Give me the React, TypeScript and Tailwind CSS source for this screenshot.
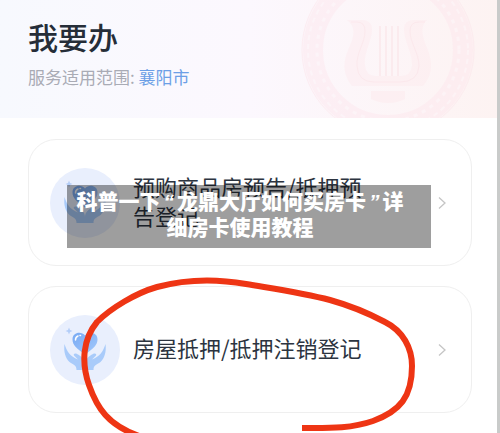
import type { ReactNode } from 'react'

function Emblem() {
  return (
    <svg viewBox="0 0 180 118" className="absolute top-0 right-5 h-[118px] w-[180px] opacity-60" fill="none" aria-hidden="true">
      <circle cx="91" cy="50" r="75" stroke="#fde6ec" strokeWidth="20" opacity="0.7" />
      <circle cx="91" cy="50" r="86" stroke="#fce6ec" strokeWidth="1" />
      <circle cx="91" cy="50" r="80" stroke="#fdf3f7" strokeWidth="2" strokeDasharray="5 4" />
      <circle cx="91" cy="50" r="71" stroke="#fdf3f7" strokeWidth="3" strokeDasharray="4 5" />
      <path
        d="M50 20h14q11 0 11 9c0 12-9 24-7 37q1 10 11 10h25q10 0 11-10c1-13-8-25-8-37q0-9 11-9h12c-8 7-4 18 0 28 5 13 7 25-4 38H55c-10-13-9-24-3-38 5-11 8-20-2-28z"
        fill="#fdeaee"
        opacity="0.75"
      />
      <path
        d="M54 22h6q8 0 8 9c0 12-9 22-8 35q1 16 17 16h26q18 0 19-16c0-13-9-23-9-35q0-9 9-9h6"
        stroke="#fbe1e6"
        strokeWidth="1"
      />
      <path d="M83 26v50M89 26v50M95 26v50M101 26v50" stroke="#fbe5e9" strokeWidth="2" />
      <path d="M74 91h34v8q-17 8-34 0z" fill="#fdecef" />
    </svg>
  )
}

function HeartHands() {
  return (
    <span className="h-[70px] w-[70px] shrink-0 rounded-full bg-[#e9effd]">
      <svg viewBox="0 0 70 70" className="h-full w-full" fill="none" aria-hidden="true">
        <defs>
          <linearGradient id="heart" x1="0" y1="0" x2="1" y2="1">
            <stop offset="0" stopColor="#78aaf4" />
            <stop offset="1" stopColor="#a4c9fb" />
          </linearGradient>
        </defs>
        <path d="M19 12.500l1 2.500 2.500 1-2.500 1-1 2.500-1-2.500-2.500-1 2.500-1z" fill="#b3cef8" />
        <path d="M35 39.500C27 34 22.500 30 22.500 24.500c0-7.500 9-8.500 12.500-4 3.500-4.500 12.500-3.500 12.500 4C47.500 30 43 34 35 39.500z" fill="url(#heart)" />
        <path d="M25.500 25c0-2 1-3.500 2.500-4M30 20.500h.5" stroke="#fff" strokeWidth="1.500" strokeLinecap="round" />
        <path
          d="M14.500 29c-1 8 1 14 5 18 4 3 7 3 7 8h8.500v-6c0-5-4-8-8-10-2-1-4 0-3 1.500l4 4c-8-3-11-8-13.500-15.500z"
          fill="#a9cbfa"
        />
        <path
          d="M55.500 29c1 8-1 14-5 18-4 3-7 3-7 8H35v-6c0-5 4-8 8-10 2-1 4 0 3 1.500l-4 4c8-3 11-8 13.500-15.500z"
          fill="#a9cbfa"
        />
      </svg>
    </span>
  )
}

function ServiceCard({ children }: { children: ReactNode }) {
  return (
    <button
      type="button"
      className="flex h-[127px] w-full items-center rounded-[28px] border border-[#efefef] bg-white pl-[21px] pr-6 text-left"
    >
      <HeartHands />
      <span className="ml-[13px] w-60 pb-1 text-[22px] leading-[29px] text-[#2c3440]">{children}</span>
      <svg viewBox="0 0 10 14" className="ml-auto h-3.5 w-2.5" fill="none" aria-hidden="true">
        <path d="M2 1.500l6 5.500-6 5.500" stroke="#c5c5c5" strokeWidth="1.300" />
      </svg>
    </button>
  )
}

function Quote({ children }: { children: ReactNode }) {
  return <span className="mx-[3px] font-['Liberation_Sans'] leading-none italic">{children}</span>
}

export default function App() {
  return (
    <div className="relative h-screen overflow-hidden border-r-[3px] border-[#c9cbca] bg-white font-['Noto_Sans_CJK_SC',sans-serif]">
      <header className="relative h-[118px] bg-linear-to-r from-[#f7f9fe] via-[#fcf8fe] to-[#fdf3f2] pl-7 pt-[18px]">
        <Emblem />
        <h1 className="relative text-[30px] leading-9 font-medium text-[#252d38]">我要办</h1>
        <p className="relative mt-[11px] text-[17px] leading-6 text-[#a9abb5]">
          服务适用范围: <a href="#city" className="text-[#6c9fe6]">襄阳市</a>
        </p>
      </header>

      <main className="flex flex-col gap-5 pt-[21px] pl-7 pr-[25px]">
        <ServiceCard>预购商品房预告/抵押预告登记</ServiceCard>
        <ServiceCard>房屋抵押/抵押注销登记</ServiceCard>
      </main>

      <svg viewBox="0 0 500 433" className="pointer-events-none absolute top-0 left-0 h-[433px] w-[500px]" fill="none" aria-hidden="true">
        <path
          d="M302 428C327 428 350 429 373 421C400 411 412 397 412 366C412 348 403 331 385 322C368 313 348 305 330 300C303 293 275 289 246 284C218 279 190 278 157 287C136 293 111 308 97 322C83 339 81 362 89 385C97 408 108 425 139 436"
          stroke="#ee3514"
          strokeWidth="6"
        />
      </svg>

      <div className="absolute top-[185px] left-[67px] right-[66px] bg-black/38 pt-0.5 pr-[18px] pb-[9px] text-center text-[21px] leading-[26px] font-black text-white">
        科普一下<Quote>“</Quote>龙鼎大厅如何买房卡<Quote>”</Quote>详细房卡使用教程
      </div>
    </div>
  )
}
